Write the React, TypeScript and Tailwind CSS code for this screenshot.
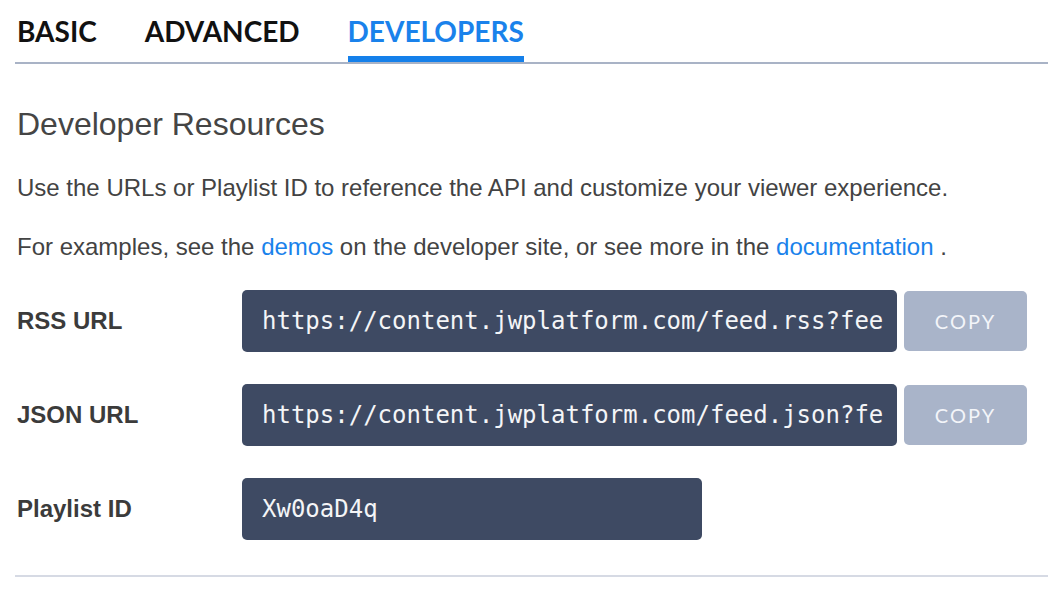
import { useState } from 'react'

const tabs = ['BASIC', 'ADVANCED', 'DEVELOPERS']

const feeds = [
  { label: 'RSS URL', value: 'https://content.jwplatform.com/feed.rss?feed_id=Xw0oaD4q' },
  { label: 'JSON URL', value: 'https://content.jwplatform.com/feed.json?feed_id=Xw0oaD4q' },
]

const App: React.FC = () => {
  const [activeTab, setActiveTab] = useState('DEVELOPERS')

  return (
    <div className="min-h-[594px] bg-white pl-[15px] font-['Liberation_Sans',Arial,sans-serif] text-[#434343]">
      {/* 탭 */}
      <nav className="flex gap-12 border-b-2 border-[#a9b3c6] pl-[2px] pt-[14px]">
        {tabs.map((tab) => {
          const isActive = tab === activeTab
          return (
            <button
              key={tab}
              onClick={() => setActiveTab(tab)}
              className={`flex flex-col font-['Lato',sans-serif] text-[28px] font-bold leading-[34px] ${
                isActive ? 'text-[#1a82eb]' : 'text-[#111111]'
              }`}
            >
              <span>{tab}</span>
              <span className={`mt-[8px] h-[6px] w-full ${isActive ? 'bg-[#1580ea]' : 'bg-transparent'}`} />
            </button>
          )
        })}
      </nav>

      <section className="pl-[2px]">
        <h2 className="mt-[42px] text-[32px] leading-[36px] text-[#454545]">Developer Resources</h2>
        <p className="mt-[32px] text-[24px] leading-[28px]">
          Use the URLs or Playlist ID to reference the API and customize your viewer experience.
        </p>
        <p className="mt-[31px] text-[24px] leading-[28px]">
          For examples, see the <a className="text-[#1a82eb]">demos</a> on the developer site, or see more in the{' '}
          <a className="text-[#1a82eb]">documentation</a> .
        </p>

        <div className="mt-[29px] flex flex-col gap-[32px]">
          {feeds.map((feed) => (
            <div key={feed.label} className="flex items-center">
              <span className="w-[225px] text-[24px] font-bold text-[#3b3b3b]">{feed.label}</span>
              <input
                readOnly
                value={feed.value}
                className="h-[62px] w-[655px] rounded-[5px] bg-[#3e4a63] pl-5 pr-[14px] font-['DejaVu_Sans_Mono',monospace] text-[24px] text-[#f4f5f7] outline-none"
              />
              <button className="ml-[7px] h-[60px] w-[123px] rounded-[5px] bg-[#a9b4c9] font-['Lato',sans-serif] text-[20px] tracking-[2px] text-[#f3f5f9]">
                COPY
              </button>
            </div>
          ))}
          <div className="flex items-center">
            <span className="w-[225px] text-[24px] font-bold text-[#3b3b3b]">Playlist ID</span>
            <input
              readOnly
              value="Xw0oaD4q"
              className="h-[62px] w-[460px] rounded-[5px] bg-[#3e4a63] pl-5 pr-[14px] font-['DejaVu_Sans_Mono',monospace] text-[24px] text-[#f4f5f7] outline-none"
            />
          </div>
        </div>
      </section>

      <div className="mt-[35px] h-[2px] bg-[#d6dae4]" />
    </div>
  )
}

export default App
